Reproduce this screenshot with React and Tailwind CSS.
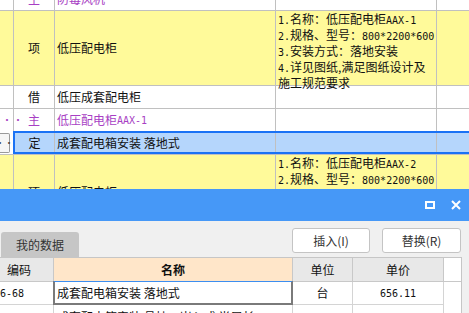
import React from "react";

const M = ({ children }) => (
  <span className="font-['DejaVu_Sans_Mono'] text-[10px]">{children}</span>
);

const line = "border-[#c0c0c0]";

const Desc = ({ rows }) => (
  <div className="pl-[2px] pt-[1px] leading-[14px] whitespace-nowrap">
    {rows.map((r, i) => (
      <div key={i}>{r}</div>
    ))}
  </div>
);

const descA = [
  <><M>1.</M>名称：低压配电柜<M>AAX-1</M></>,
  <><M>2.</M>规格、型号：<M>800*2200*600</M></>,
  <><M>3.</M>安装方式：落地安装</>,
  <><M>4.</M>详见图纸,满足图纸设计及</>,
  <>施工规范要求</>,
];

const descB = [
  <><M>1.</M>名称：低压配电柜<M>AAX-2</M></>,
  <><M>2.</M>规格、型号：<M>800*2200*600</M></>,
  <><M>3.</M>安装方式：落地安装</>,
  <><M>4.</M>详见图纸,满足图纸设计及</>,
  <>施工规范要求</>,
];

function Row({ h, bg = "bg-white", first, type, typeCls = "", name, nameCls = "", desc, noBorder }) {
  return (
    <div className={`flex shrink-0 ${h} ${bg} ${noBorder ? "" : `border-b ${line}`}`}>
      <div className={`w-[14px] shrink-0 border-r ${line} flex items-center`}>{first}</div>
      <div className={`w-[41px] shrink-0 border-r ${line} flex items-center justify-center ${typeCls}`}>{type}</div>
      <div className={`w-[221px] shrink-0 border-r ${line} flex items-center pl-[2px] ${nameCls}`}>{name}</div>
      <div className={`w-[161px] shrink-0 border-r ${line}`}>{desc}</div>
      <div className="flex-1" />
    </div>
  );
}

export default function App() {
  return (
    <div className="relative w-[469px] h-[313px] overflow-hidden bg-white text-[12px] text-[#111] font-['Noto_Sans_CJK_SC',sans-serif]">
      {/* grid behind the dialog */}
      <div className="w-[520px] -mt-[12px]">
        <Row h="h-[23px]" type="主" typeCls="text-[#a83fc4]" name="防毒风机" nameCls="text-[#a83fc4]" />
        <Row h="h-[75px]" bg="bg-[#fffa9a]" type="项" name="低压配电柜" desc={<Desc rows={descA} />} />
        <Row h="h-[23px]" type="借" name="低压成套配电柜" />
        <Row
          h="h-[22px]"
          noBorder
          first={<span className="pl-[2px] text-[10px] leading-none text-[#a83fc4] tracking-[1px]">··</span>}
          type="主"
          typeCls="text-[#a83fc4]"
          name={<>低压配电柜<M>AAX-1</M></>}
          nameCls="text-[#a83fc4]"
        />
        {/* selected row */}
        <div className={`flex h-[24px] border-b ${line}`}>
          <div className="w-[13px] shrink-0 flex items-center">
            <div className="w-[10px] h-[20px] border-y border-r border-[#9a9a9a] rounded-r-[2px] bg-[#f6f6f6] flex items-center justify-center text-[9px] leading-none text-[#444]">
              ··
            </div>
          </div>
          <div className="flex flex-1 border-2 border-[#1a72f5] bg-[#b5d6fc]">
            <div className={`w-[40px] shrink-0 border-r ${line} flex items-center justify-center`}>定</div>
            <div className={`w-[221px] shrink-0 border-r ${line} flex items-center pl-[2px]`}>成套配电箱安装 落地式</div>
            <div className={`w-[161px] shrink-0 border-r ${line}`} />
            <div className="flex-1" />
          </div>
        </div>
        <Row h="h-[75px]" bg="bg-[#fffa9a]" type="项" name="低压配电柜" desc={<Desc rows={descB} />} />
      </div>

      {/* dialog */}
      <div className="absolute left-0 right-0 top-[189px] bottom-0 flex flex-col overflow-hidden">
        <div className="h-[32px] shrink-0 bg-[#4698f7] flex items-center justify-end pr-[8px] gap-[16px]">
          <svg width="10" height="8" viewBox="0 0 10 8">
            <rect x="1" y="1" width="8" height="6" fill="none" stroke="white" strokeWidth="2" />
          </svg>
          <svg width="10" height="10" viewBox="0 0 10 10">
            <path d="M1 1 L9 9 M9 1 L1 9" stroke="white" strokeWidth="2" />
          </svg>
        </div>
        <div className="flex-1 min-h-0 bg-[#f0f0f0] flex flex-col">
          <div className="h-[36px] shrink-0 flex justify-between">
            <div className="self-end ml-[1px] w-[78px] h-[25px] bg-[#c6c6c6] rounded-t-[3px] flex items-center justify-center text-[#333]">
              我的数据
            </div>
            <div className="flex gap-[12px] pr-[8px] pt-[7px]">
              <button className="w-[78px] h-[25px] bg-white border border-[#c4c4c4] rounded-[3px] text-[#333]">
                插入(I)
              </button>
              <button className="w-[79px] h-[25px] bg-white border border-[#c4c4c4] rounded-[3px] text-[#333]">
                替换(R)
              </button>
            </div>
          </div>
          <div className="w-[462px] shrink-0 h-[100px] bg-white border-t border-r border-[#c6c6c6]">
            <div className="flex h-[24px] border-b border-[#c8c8c8]">
              <div className="w-[54px] shrink-0 bg-[#e8e8e8] border-r border-[#c8c8c8] flex items-center pl-[7px]">编码</div>
              <div className="w-[239px] shrink-0 bg-[#ffe6c9] border-r border-[#c8c8c8] flex items-center justify-center font-bold">名称</div>
              <div className="w-[60px] shrink-0 bg-[#e8e8e8] border-r border-[#c8c8c8] flex items-center justify-center">单位</div>
              <div className="w-[91px] shrink-0 bg-[#e8e8e8] border-r border-[#c8c8c8] flex items-center justify-center">单价</div>
              <div className="flex-1" />
            </div>
            <div className="flex h-[23px]">
              <div className="w-[53px] shrink-0 border-b border-[#d4d4d4] flex items-center">
                <M>6-68</M>
              </div>
              <div className="w-[240px] shrink-0 border-t border-t-[#3d8ef0] border-x-2 border-b-2 border-x-[#7a7a7a] border-b-[#7a7a7a] flex items-center pl-[2px] -mt-[1px]">
                成套配电箱安装 落地式
              </div>
              <div className="w-[60px] shrink-0 border-r border-b border-[#d4d4d4] flex items-center justify-center">台</div>
              <div className="w-[91px] shrink-0 border-r border-b border-[#d4d4d4] flex items-center justify-center">
                <M>656.11</M>
              </div>
              <div className="flex-1" />
            </div>
            <div className="flex h-[23px]">
              <div className="w-[54px] shrink-0 border-r border-[#d4d4d4]" />
              <div className="w-[239px] shrink-0 border-r border-[#d4d4d4] pl-[3px] pt-[3px] whitespace-nowrap overflow-hidden">
                成套配电箱安装 悬挂、嵌入式 半周长<M>0.5m</M>
              </div>
              <div className="w-[60px] shrink-0 border-r border-[#d4d4d4]" />
              <div className="w-[91px] shrink-0 border-r border-[#d4d4d4]" />
            </div>
          </div>
        </div>
      </div>
    </div>
  );
}
